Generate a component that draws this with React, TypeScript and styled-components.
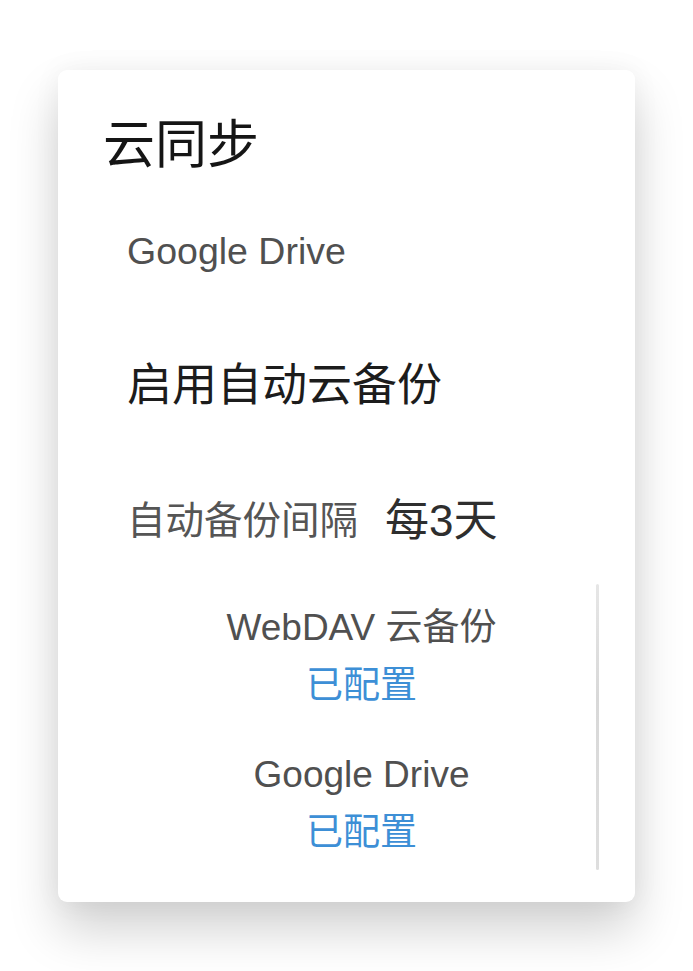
import React from "react";
import styled, { createGlobalStyle } from "styled-components";

const GlobalStyle = createGlobalStyle`
  html, body { margin: 0; padding: 0; background: #ffffff; }
  body { font-family: "Liberation Sans", "Noto Sans CJK SC", sans-serif; }
`;

const Page = styled.div`
  width: 693px;
  height: 971px;
  box-sizing: border-box;
  padding: 70px 0 0 58px;
  background: #ffffff;
  overflow: hidden;
`;

const Card = styled.div`
  width: 577px;
  height: 832px;
  box-sizing: border-box;
  background: #ffffff;
  border-radius: 9px;
  box-shadow: 0 28px 50px rgba(0, 0, 0, 0.18), 0 0 28px rgba(0, 0, 0, 0.05);
  display: flex;
  flex-direction: column;
`;

const Title = styled.h1`
  margin: 40px 0 0 45px;
  font-family: "Noto Sans CJK SC", sans-serif;
  font-weight: 400;
  font-size: 52px;
  line-height: 62px;
  color: #151515;
`;

const Item = styled.div<{ $size: number; $color: string; $gap: number; $lh: number }>`
  margin: ${(p) => p.$gap}px 0 0 69px;
  font-size: ${(p) => p.$size}px;
  line-height: ${(p) => p.$lh}px;
  color: ${(p) => p.$color};
  font-family: "Liberation Sans", "Noto Sans CJK SC", sans-serif;
  display: flex;
  align-items: center;
  gap: 27px;
`;

const Value = styled.span`
  font-size: 44px;
  color: #2e2e2e;
`;

const ListArea = styled.div`
  margin: 38px 0 0 69px;
  width: 472px;
  display: flex;
  align-items: stretch;
`;

const List = styled.div`
  flex: 1;
  padding: 21px 0 18px;
  display: flex;
  flex-direction: column;
  align-items: center;
`;

const ScrollTrack = styled.div`
  width: 3px;
  border-radius: 2px;
  background: linear-gradient(to bottom, #e6e6e6, #d8d8d8 40%, #dedede);
`;

const Provider = styled.div<{ $first?: boolean }>`
  margin-top: ${(p) => (p.$first ? 0 : 47)}px;
  display: flex;
  flex-direction: column;
  align-items: center;
  gap: 8px;
`;

const ProviderName = styled.div`
  font-size: 37px;
  line-height: 46px;
  color: #505050;
  white-space: nowrap;
`;

const Status = styled.div`
  font-family: "Noto Sans CJK SC", sans-serif;
  font-size: 37px;
  line-height: 46px;
  color: #3d8fd6;
`;

export default function App() {
  return (
    <>
      <GlobalStyle />
      <Page>
        <Card>
          <Title>云同步</Title>
          <Item $size={37.5} $lh={50} $gap={54} $color="#505050">
            Google Drive
          </Item>
          <Item $size={45} $lh={60} $gap={80} $color="#1c1c1c">
            启用自动云备份
          </Item>
          <Item $size={38.5} $lh={50} $gap={80} $color="#555555">
            自动备份间隔
            <Value>每3天</Value>
          </Item>
          <ListArea>
            <List>
              <Provider $first>
                <ProviderName>WebDAV 云备份</ProviderName>
                <Status>已配置</Status>
              </Provider>
              <Provider>
                <ProviderName>Google Drive</ProviderName>
                <Status>已配置</Status>
              </Provider>
            </List>
            <ScrollTrack />
          </ListArea>
        </Card>
      </Page>
    </>
  );
}
